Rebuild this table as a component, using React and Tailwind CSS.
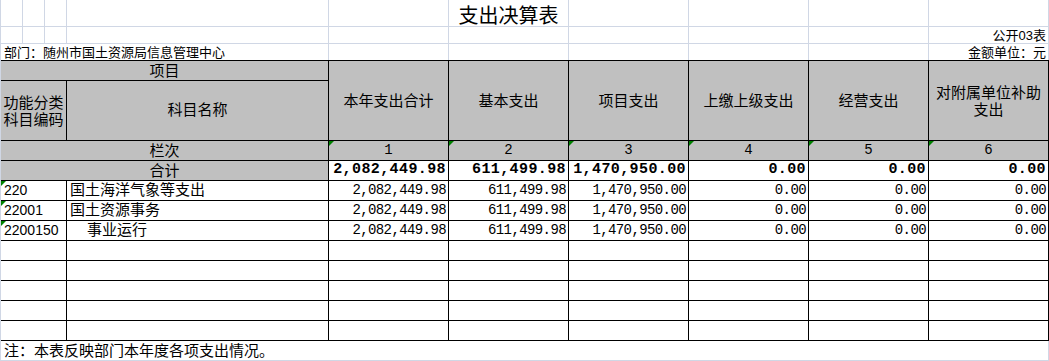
import React from 'react';

// Excel-style "支出决算表" sheet
const headers = ['本年支出合计', '基本支出', '项目支出', '上缴上级支出', '经营支出', '对附属单位补助支出'];

const total = ['2,082,449.98', '611,499.98', '1,470,950.00', '0.00', '0.00', '0.00'];

const rows = [
  { code: '220', name: '国土海洋气象等支出', indent: false, values: total },
  { code: '22001', name: '国土资源事务', indent: false, values: total },
  { code: '2200150', name: '事业运行', indent: true, values: total },
];

const grid = 'border-r border-b border-[#d0d7e5]';
const cell = 'border-r border-b border-black';

function Flag() {
  return (
    <span className="absolute top-0 left-0 w-[5px] h-[5px] bg-[#008000] [clip-path:polygon(0_0,100%_0,0_100%)]" />
  );
}

function App() {
  return (
    <div className="w-[1049px] h-[361px] bg-white text-black border-l border-[#d0d7e5] font-['Liberation_Sans','Noto_Sans_CJK_SC',sans-serif] overflow-hidden">
      {/* sheet title rows */}
      <div className="grid grid-cols-[22px_22px_22px_262px_repeat(6,120px)] grid-rows-[27px_17px_16px]">
        {Array.from({ length: 10 }).map((_, i) => (
          <div key={'a' + i} className={`${grid} flex items-center justify-center pt-[3px]`}>
            {i === 5 && (
              <span className="text-[20px] leading-none whitespace-nowrap font-['Noto_Sans_CJK_SC',sans-serif]">支出决算表</span>
            )}
          </div>
        ))}
        {Array.from({ length: 10 }).map((_, i) => (
          <div key={'b' + i} className={`${grid} flex items-end justify-end pr-[2px]`}>
            {i === 9 && <span className="text-[13px] leading-[15px]">公开03表</span>}
          </div>
        ))}
        <div className="col-span-4 border-r border-[#d0d7e5] flex items-end pl-[3px]">
          <span className="text-[13px] leading-[15px] whitespace-nowrap">部门：随州市国土资源局信息管理中心</span>
        </div>
        {Array.from({ length: 6 }).map((_, i) => (
          <div key={'c' + i} className="border-r border-[#d0d7e5] flex items-end justify-end pr-[2px]">
            {i === 5 && <span className="text-[13px] leading-[15px]">金额单位：元</span>}
          </div>
        ))}
      </div>

      {/* table */}
      <div className="grid grid-cols-[66px_262px_repeat(6,120px)] grid-rows-[20px_60px_repeat(10,20px)] border-t border-black text-[15px]">
        <div className={`${cell} col-span-2 bg-[#c0c0c0] flex items-center justify-center leading-[18px]`}>项目</div>
        {headers.map((h) => (
          <div key={h} className={`${cell} row-span-2 bg-[#c0c0c0] flex items-center justify-center text-center px-[6px] leading-[17px]`}>
            {h}
          </div>
        ))}
        <div className={`${cell} bg-[#c0c0c0] flex items-center justify-center text-center leading-[17px]`}>
          功能分类
          <br />
          科目编码
        </div>
        <div className={`${cell} bg-[#c0c0c0] flex items-center justify-center`}>科目名称</div>

        <div className={`${cell} col-span-2 bg-[#c0c0c0] flex items-center justify-center leading-[18px]`}>栏次</div>
        {[1, 2, 3, 4, 5, 6].map((n) => (
          <div key={'n' + n} className={`${cell} relative bg-[#c0c0c0] flex items-center justify-center font-['Liberation_Mono',monospace] text-[14px]`}>
            <Flag />
            {n}
          </div>
        ))}

        <div className={`${cell} col-span-2 bg-[#c0c0c0] flex items-center justify-center leading-[18px]`}>合计</div>
        {total.map((v, i) => (
          <div key={'t' + i} className={`${cell} flex items-center justify-end pr-[2px] font-['Liberation_Mono',monospace] font-bold text-[15px] tracking-[0.4px]`}>
            {v}
          </div>
        ))}

        {rows.map((r) => (
          <React.Fragment key={r.code}>
            <div className={`${cell} relative flex items-center pl-[3px] text-[14px]`}>
              <Flag />
              {r.code}
            </div>
            <div className={`${cell} flex items-center ${r.indent ? 'pl-[20px]' : 'pl-[3px]'}`}>{r.name}</div>
            {r.values.map((v, i) => (
              <div key={i} className={`${cell} flex items-center justify-end pr-[2px] font-['Liberation_Mono',monospace] text-[14px] tracking-[-0.6px]`}>
                {v}
              </div>
            ))}
          </React.Fragment>
        ))}

        {Array.from({ length: 40 }).map((_, i) => (
          <div key={'e' + i} className={cell} />
        ))}
      </div>

      <div className="w-[1048px] h-[20px] border-r border-b border-[#d0d7e5] flex items-center pl-[3px] text-[15px] leading-[18px]">
        注：本表反映部门本年度各项支出情况。
      </div>
    </div>
  );
}

export default App;
